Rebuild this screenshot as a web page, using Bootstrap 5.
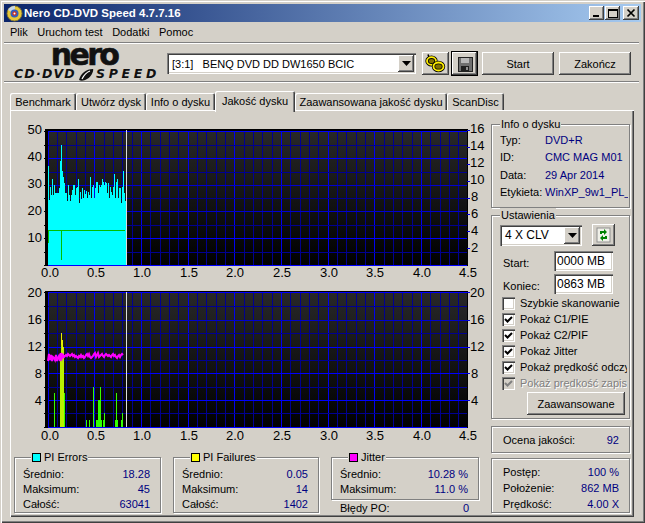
<!DOCTYPE html>
<html lang="pl">
<head>
<meta charset="utf-8">
<title>Nero CD-DVD Speed</title>
<link href="https://cdn.jsdelivr.net/npm/bootstrap@5.3.0/dist/css/bootstrap.min.css" rel="stylesheet">
<style>
html,body{margin:0;height:523px;overflow:hidden;background:#d4d0c8}
body{font-family:"Liberation Sans",Arial,sans-serif;font-size:11px;line-height:14px;color:#000}
.win{width:645px;height:523px;padding:4px;background:#d4d0c8;box-shadow:inset 1px 1px 0 #d4d0c8,inset 2px 2px 0 #fff,inset -1px -1px 0 #404040,inset -2px -2px 0 #808080}
.ttl{height:18px;background:linear-gradient(90deg,#0a246a,#a6caf0);color:#fff;font-weight:700;font-size:11.5px;padding:0 2px 0 2px}
.ttl svg.dsk{margin-right:1px}
.capb{width:15px;height:14px;background:#d4d0c8;box-shadow:inset -1px -1px 0 #404040,inset 1px 1px 0 #fff,inset -2px -2px 0 #808080;display:flex;align-items:center;justify-content:center}
.capm{margin-right:1px}
.capx{width:16px;margin-left:3px}
.mnu{height:20px;padding-left:6px}
.mnu span{margin-right:9.500px}
.sep{height:2px;border-top:1px solid #808080;background:#fff;margin-right:2px;box-sizing:border-box}
.tbar{height:37px;padding-top:8px}
.logo{width:163px;height:37px;margin-top:-8px;position:relative;flex:none}
.nero{font-family:"DejaVu Sans",sans-serif;font-weight:700;font-size:30px;letter-spacing:-2.6px;line-height:22px;text-align:center;padding-right:3px;height:22px;color:#111;-webkit-text-stroke:.6px #111}
.cdv{font-family:"DejaVu Sans",sans-serif;font-weight:700;font-style:italic;font-size:12.5px;line-height:13px;white-space:nowrap;padding-left:10px;margin-top:1px;color:#111}
.cdv b{letter-spacing:1.2px;font-weight:700}
.cdv i{letter-spacing:3.700px;font-weight:700}
.sunk{background:#fff;box-shadow:inset 1px 1px 0 #808080,inset 2px 2px 0 #404040,inset -1px -1px 0 #fff,inset -2px -2px 0 #d4d0c8}
.cbo{height:21px;align-items:center;padding:0 2px 0 5px}
.cbo1{width:249px;margin-top:1px}
.cbo2{width:82px;height:21px;padding-left:5px}
.cbo-t{flex:1;white-space:pre;font-size:11px}
.cbo2 .cbo-t{font-size:12px}
.arrw{width:16px;height:17px;background:#d4d0c8;box-shadow:inset -1px -1px 0 #404040,inset 1px 1px 0 #fff,inset -2px -2px 0 #808080;display:flex;align-items:center;justify-content:center;flex:none}
.wbtn.btn{--bs-btn-padding-x:0;--bs-btn-padding-y:0;--bs-btn-font-size:11px;--bs-btn-border-width:0;--bs-btn-border-radius:0;--bs-btn-line-height:14px;background:#d4d0c8;color:#000;box-shadow:inset -1px -1px 0 #404040,inset 1px 1px 0 #fff,inset -2px -2px 0 #808080;display:flex;align-items:center;justify-content:center;height:23px;font-family:"Liberation Sans",Arial,sans-serif}
.wbtn.def{box-shadow:0 0 0 1px #000,inset -1px -1px 0 #404040,inset 1px 1px 0 #fff,inset -2px -2px 0 #808080}
.w27{width:27px}.w25{width:25px}.w72{width:72px}
.tbtn1{margin-left:6px}.tbtn2{margin-left:3px}.tbtn3{margin-left:5px}.tbtn4{margin-left:5px}
.tabs.nav{margin:8px 0 0 2px;height:20px;align-items:flex-end;flex-wrap:nowrap;position:relative;z-index:2;padding-left:0}
.tabs .nav-link{display:block;height:17px;line-height:19px;padding:0;text-align:center;color:#000;background:#d4d0c8;border-radius:2px 2px 0 0;box-shadow:inset 1px 1px 0 #fff,inset -1px 0 0 #404040,inset -2px 0 0 #808080;margin-bottom:1px;white-space:nowrap}
.tabs .nav-link.active{height:21px;line-height:20px;margin-bottom:-1px;color:#000;background:#d4d0c8;box-shadow:inset 1px 1px 0 #fff,inset -1px 0 0 #404040,inset -2px 0 0 #808080}
.tabs li:nth-child(1) .nav-link{width:66px;margin-left:4px}
.tabs li:nth-child(2) .nav-link{width:70px}
.tabs li:nth-child(3) .nav-link{width:69px}
.tabs li:nth-child(4) .nav-link{width:80px}
.tabs li:nth-child(5) .nav-link{width:152px}
.tabs li:nth-child(6) .nav-link{width:57px}
.pane{margin:-1px 0 0 6px;width:624px;height:407px;padding:2px;box-shadow:inset 1px 1px 0 #fff,inset -1px -1px 0 #404040,inset -2px -2px 0 #808080;position:relative;z-index:1}
.lcol{width:479px;flex:none}
.rcol{width:140px;flex:none;padding-top:5px}
svg.chrt{display:block;font-family:"Liberation Sans",Arial,sans-serif;font-size:13px}
.grp{border:1px solid #808080;box-shadow:1px 1px 0 #fff,inset 1px 1px 0 #fff;padding:0 8px;margin:0;min-width:0}
fieldset.grp{border:1px solid #808080}
.grp legend{float:none;width:auto;font-size:11px;line-height:14px;margin:0;padding:0 1px;background:#d4d0c8;display:flex;align-items:center}
.sw{width:9px;height:9px;border:1px solid #000;margin:0 3px 0 0;flex:none;display:inline-block}
.c-cy{background:#00ffff}.c-ye{background:#ffff00}.c-ma{background:#ff00ff}
.val{color:#000080}
.inf{height:91px;width:139px;padding-right:1px}
.inf .rw{height:17.500px;display:flex;align-items:center;justify-content:flex-start;white-space:nowrap;overflow:hidden}
.inf .lb{width:45px;flex:none}
.ust{height:211px;width:139px;padding-right:2px}
.cb-row{margin-top:2px}
.rst{margin-top:3px}
.rw2{height:23px;display:flex;align-items:center}
.rw2 .lb{width:54px;padding:4px 0 0 3px;flex:none}
.fld.form-control{width:59px;height:20px;min-height:0;padding:0 0 0 3px;font-size:12px;line-height:18px;border:0;border-radius:0;color:#000;font-family:"Liberation Sans",Arial,sans-serif}
.sy.btn{width:23px;height:22px;margin-left:10px}
.ck.form-check{min-height:0;height:16px;padding:0;margin:0 0 0 2px;display:flex;align-items:center;white-space:nowrap;overflow:hidden;width:125px}
.ck .form-check-input{float:none;margin:0 5px 0 0;width:13px;height:13px;flex:none;border:0;border-radius:0;background-color:#fff;box-shadow:inset 1px 1px 0 #808080,inset 2px 2px 0 #404040,inset -1px -1px 0 #fff,inset -2px -2px 0 #d4d0c8;opacity:1}
.ck .form-check-input:checked{background-color:#fff;background-image:url("data:image/svg+xml,%3Csvg xmlns='http://www.w3.org/2000/svg' viewBox='0 0 13 13'%3E%3Cpath d='M3 6l2.500 2.500L10 4' fill='none' stroke='%23000' stroke-width='2'/%3E%3C/svg%3E");background-size:13px 13px}
.ck .form-check-input.dis:checked{background-color:#d4d0c8;background-image:url("data:image/svg+xml,%3Csvg xmlns='http://www.w3.org/2000/svg' viewBox='0 0 13 13'%3E%3Cpath d='M3 6l2.500 2.500L10 4' fill='none' stroke='%23808080' stroke-width='2'/%3E%3C/svg%3E")}
.ck .form-check-label{opacity:1;color:#000}
.ck .form-check-label.dis{color:#808080;text-shadow:1px 1px 0 #fff}
.adv.btn{width:98px;margin:1px 0 0 27px}
.oc{width:139px;height:27px;margin-top:7px;padding:0 10px 0 11px}
.pr{width:139px;height:55px;margin-top:5px;padding:5px 10px 0 11px}
.pr .rw{height:16px}
.rw{display:flex;justify-content:space-between;align-items:center}
.bot{margin:2px 0 0 2px;gap:12px}
.b1{width:147px;height:63px;padding:2px 10px 0 8px}
.b2{width:146px;height:63px;padding:2px 10px 0 8px}
.b3col{width:148px}
.b3{height:50px;padding:2px 10px 0 8px}
.grp .rw15{height:15px}
.bl{padding:1px 10px 0 9px;height:15px}
.bot legend{margin-left:8px}
</style>
</head>
<body>
<div class="win d-flex flex-column">
  <div class="ttl d-flex align-items-center">
    <svg class="dsk" width="17" height="17" viewBox="0 0 17 17"><circle cx="8.500" cy="8.500" r="7.500" fill="#e8c838" stroke="#8a7a30"/><path d="M8.500 8.500L2 5A7.500 7.500 0 0 1 9 1Z" fill="#c8d8e8"/><circle cx="8.500" cy="8.500" r="4" fill="#3060c0"/><circle cx="8.500" cy="8.500" r="2.200" fill="#d03020"/><circle cx="8.500" cy="8.500" r="1" fill="#fff"/></svg>
    <span class="flex-grow-1">Nero CD-DVD Speed 4.7.7.16</span>
    <span class="capb capm"><svg width="10" height="10" viewBox="0 0 10 10" shape-rendering="crispEdges"><rect x="1" y="7" width="6" height="2" fill="#000"/></svg></span>
    <span class="capb"><svg width="10" height="10" viewBox="0 0 10 10" shape-rendering="crispEdges"><path d="M0.500 1.500h9v8h-9zM0 1h10v1H0z" fill="none" stroke="#000"/></svg></span>
    <span class="capb capx"><svg width="10" height="10" viewBox="0 0 10 10"><path d="M1.500 1.500l7 7M8.500 1.500l-7 7" stroke="#000" stroke-width="1.700"/></svg></span>
  </div>
  <div class="mnu d-flex align-items-center"><span>Plik</span><span>Uruchom test</span><span>Dodatki</span><span>Pomoc</span></div>
  <div class="sep"></div>
  <div class="tbar d-flex align-items-start">
    <div class="logo">
      <div class="nero">nero</div>
      <div class="cdv"><b>CD·DVD</b><svg width="20" height="12" viewBox="0 0 20 12"><path d="M3 11C5 4 10 0 17 0C18 0 16 8 11 10C8 12 5 12 3 11Z" fill="#111"/><path d="M6 10C8 6 11 3 14 2" stroke="#fff" stroke-width="1.200" fill="none"/></svg><i>SPEED</i></div>
    </div>
    <div class="sunk cbo cbo1 d-flex"><span class="cbo-t">[3:1]   BENQ DVD DD DW1650 BCIC</span><span class="arrw"><svg width="9" height="5" viewBox="0 0 9 5"><path d="M0 0h9L4.500 5Z" fill="#000"/></svg></span></div>
    <button type="button" class="btn wbtn w27 tbtn1"><svg width="21" height="19" viewBox="0 0 21 19"><path d="M3 0.500l2 5M15 10l2 5" stroke="#000" stroke-width="1.600"/><ellipse cx="6.500" cy="7" rx="4.500" ry="3.800" fill="#807000" stroke="#000" stroke-width="3.400"/><ellipse cx="6.500" cy="7" rx="4.500" ry="3.800" fill="none" stroke="#ffee00" stroke-width="1.800"/><ellipse cx="13.500" cy="12.500" rx="5" ry="4" fill="#807000" stroke="#000" stroke-width="3.400"/><ellipse cx="13.500" cy="12.500" rx="5" ry="4" fill="none" stroke="#ffee00" stroke-width="1.800"/></svg></button>
    <button type="button" class="btn wbtn def w25 tbtn2"><svg width="16" height="16" viewBox="0 0 16 16" shape-rendering="crispEdges"><rect x="1" y="1" width="14" height="14" fill="#707070" stroke="#222"/><rect x="4" y="2" width="8" height="5" fill="#b8b8b8"/><rect x="4" y="10" width="8" height="5" fill="#202020"/><rect x="9" y="11" width="2" height="3" fill="#909090"/></svg></button>
    <button type="button" class="btn wbtn w72 tbtn3">Start</button>
    <button type="button" class="btn wbtn w72 tbtn4">Zakończ</button>
  </div>
  <div class="sep"></div>
  <ul class="nav tabs">
    <li class="nav-item"><a class="nav-link" href="#">Benchmark</a></li>
    <li class="nav-item"><a class="nav-link" href="#">Utwórz dysk</a></li>
    <li class="nav-item"><a class="nav-link" href="#">Info o dysku</a></li>
    <li class="nav-item"><a class="nav-link active" href="#">Jakość dysku</a></li>
    <li class="nav-item"><a class="nav-link" href="#">Zaawansowana jakość dysku</a></li>
    <li class="nav-item"><a class="nav-link" href="#">ScanDisc</a></li>
  </ul>
  <div class="pane d-flex">
    <div class="lcol">
      <svg class="chrt" width="479" height="173" viewBox="12 112 479 173" shape-rendering="crispEdges">
        <defs><linearGradient id="gr" x1="0" y1="0" x2="0" y2="1"><stop offset="0" stop-color="#282828"/><stop offset="1" stop-color="#000"/></linearGradient></defs>
        <rect x="45" y="129" width="423" height="137" fill="#000"/>
        <rect x="48" y="131" width="419" height="134" fill="url(#gr)"/>
        <g id="g1"></g>
        <path id="cy" fill="#00ffff"/>
        <path d="M48 230.500H125M48.500 230V243M61.500 230V260" stroke="#00c000" fill="none"/>
        <path d="M126.500 130V265" stroke="#dcdcdc" fill="none"/>
        <g shape-rendering="auto">
          <text x="42" y="134" text-anchor="end">50</text><text x="42" y="161" text-anchor="end">40</text><text x="42" y="188" text-anchor="end">30</text><text x="42" y="215" text-anchor="end">20</text><text x="42" y="242" text-anchor="end">10</text>
          <text x="470" y="133">16</text><text x="470" y="150">14</text><text x="470" y="167">12</text><text x="470" y="184">10</text><text x="471" y="201">8</text><text x="471" y="218">6</text><text x="471" y="235">4</text><text x="471" y="252">2</text>
          <g id="x1" text-anchor="middle">
            <text x="50" y="277">0.0</text><text x="96" y="277">0.5</text><text x="142" y="277">1.0</text><text x="189" y="277">1.5</text><text x="235" y="277">2.0</text><text x="282" y="277">2.5</text><text x="329" y="277">3.0</text><text x="375" y="277">3.5</text><text x="422" y="277">4.0</text><text x="468" y="277">4.5</text>
          </g>
        </g>
      </svg>
      <svg class="chrt" width="479" height="163" viewBox="12 285 479 163" shape-rendering="crispEdges">
        <rect x="45" y="291" width="423" height="137" fill="#000"/>
        <rect x="48" y="293" width="419" height="134" fill="url(#gr)"/>
        <g id="g2"></g>
        <path id="gb" stroke="#33ff00" fill="none"/>
        <path d="M60.500 360V427M61.500 333V427M62.500 340V427M63.500 347V427" stroke="#b8f000" fill="none"/>
        <path d="M61.500 333V345M62.500 340V350" stroke="#e8f000" fill="none"/>
        <polyline id="jt" fill="none" stroke="#ff00ff" stroke-width="2" shape-rendering="auto"/>
        <path d="M126.500 292V427" stroke="#dcdcdc" fill="none"/>
        <g shape-rendering="auto">
          <text x="42" y="297" text-anchor="end">20</text><text x="42" y="324" text-anchor="end">16</text><text x="42" y="351" text-anchor="end">12</text><text x="42" y="378" text-anchor="end">8</text><text x="42" y="405" text-anchor="end">4</text>
          <text x="470" y="297">20</text><text x="470" y="324">16</text><text x="470" y="351">12</text><text x="471" y="378">8</text><text x="471" y="405">4</text>
          <g text-anchor="middle">
            <text x="50" y="440">0.0</text><text x="96" y="440">0.5</text><text x="142" y="440">1.0</text><text x="189" y="440">1.5</text><text x="235" y="440">2.0</text><text x="282" y="440">2.5</text><text x="329" y="440">3.0</text><text x="375" y="440">3.5</text><text x="422" y="440">4.0</text><text x="468" y="440">4.5</text>
          </g>
        </g>
      </svg>
      <div class="bot d-flex align-items-start">
        <fieldset class="grp b1">
          <legend><span class="sw c-cy"></span>PI Errors</legend>
          <div class="rw rw15"><span>Średnio:</span><span class="val">18.28</span></div>
          <div class="rw rw15"><span>Maksimum:</span><span class="val">45</span></div>
          <div class="rw rw15"><span>Całość:</span><span class="val">63041</span></div>
        </fieldset>
        <fieldset class="grp b2">
          <legend><span class="sw c-ye"></span>PI Failures</legend>
          <div class="rw rw15"><span>Średnio:</span><span class="val">0.05</span></div>
          <div class="rw rw15"><span>Maksimum:</span><span class="val">14</span></div>
          <div class="rw rw15"><span>Całość:</span><span class="val">1402</span></div>
        </fieldset>
        <div class="b3col">
          <fieldset class="grp b3">
            <legend><span class="sw c-ma"></span>Jitter</legend>
            <div class="rw rw15"><span>Średnio:</span><span class="val">10.28 %</span></div>
            <div class="rw rw15"><span>Maksimum:</span><span class="val">11.0 %</span></div>
          </fieldset>
          <div class="rw bl"><span>Błędy PO:</span><span class="val">0</span></div>
        </div>
      </div>
    </div>
    <div class="rcol">
      <fieldset class="grp inf">
        <legend>Info o dysku</legend>
        <div class="rw"><span class="lb">Typ:</span><span class="val flex-grow-1">DVD+R</span></div>
        <div class="rw"><span class="lb">ID:</span><span class="val flex-grow-1">CMC MAG M01</span></div>
        <div class="rw"><span class="lb">Data:</span><span class="val flex-grow-1">29 Apr 2014</span></div>
        <div class="rw"><span class="lb">Etykieta:</span><span class="val flex-grow-1">WinXP_9w1_PL_</span></div>
      </fieldset>
      <fieldset class="grp ust">
        <legend>Ustawienia</legend>
        <div class="d-flex align-items-center cb-row">
          <div class="sunk cbo cbo2 d-flex"><span class="cbo-t">4 X CLV</span><span class="arrw"><svg width="9" height="5" viewBox="0 0 9 5"><path d="M0 0h9L4.500 5Z" fill="#000"/></svg></span></div>
          <button type="button" class="btn wbtn sy"><svg width="15" height="16" viewBox="0 0 15 16"><rect x="1" y="1" width="13" height="14" fill="#f0f0e8" stroke="#909090"/><path d="M4 7V4h4V2l3 3-3 3V6H6v1ZM11 9v3H7v2l-3-3 3-3v2h2V9Z" fill="#008000"/></svg></button>
        </div>
        <div class="rw2 rst"><span class="lb">Start:</span><input class="form-control fld sunk" value="0000 MB"></div>
        <div class="rw2"><span class="lb">Koniec:</span><input class="form-control fld sunk" value="0863 MB"></div>
        <div class="form-check ck"><input class="form-check-input" type="checkbox" id="c1"><label class="form-check-label" for="c1">Szybkie skanowanie</label></div>
        <div class="form-check ck"><input class="form-check-input" type="checkbox" id="c2" checked><label class="form-check-label" for="c2">Pokaż C1/PIE</label></div>
        <div class="form-check ck"><input class="form-check-input" type="checkbox" id="c3" checked><label class="form-check-label" for="c3">Pokaż C2/PIF</label></div>
        <div class="form-check ck"><input class="form-check-input" type="checkbox" id="c4" checked><label class="form-check-label" for="c4">Pokaż Jitter</label></div>
        <div class="form-check ck"><input class="form-check-input" type="checkbox" id="c5" checked><label class="form-check-label" for="c5">Pokaż prędkość odczytu</label></div>
        <div class="form-check ck"><input class="form-check-input dis" type="checkbox" id="c6" checked><label class="form-check-label dis" for="c6">Pokaż prędkość zapisu</label></div>
        <button type="button" class="btn wbtn adv">Zaawansowane</button>
      </fieldset>
      <div class="grp oc rw"><span>Ocena jakości:</span><span class="val">92</span></div>
      <div class="grp pr">
        <div class="rw"><span>Postęp:</span><span class="val">100 %</span></div>
        <div class="rw"><span>Położenie:</span><span class="val">862 MB</span></div>
        <div class="rw"><span>Prędkość:</span><span class="val">4.00 X</span></div>
      </div>
    </div>
  </div>
</div>
<script>
(function(){
  var NS='http://www.w3.org/2000/svg';
  function line(g,x1,y1,x2,y2,c){var l=document.createElementNS(NS,'line');l.setAttribute('x1',x1);l.setAttribute('y1',y1);l.setAttribute('x2',x2);l.setAttribute('y2',y2);l.setAttribute('stroke',c);g.appendChild(l);}
  function grid(id,top,bot,hs,rt){
    var g=document.getElementById(id);
    for(var i=0;i<45;i++){var x=Math.round(47.7+9.333*i)+.5;line(g,x,top,x,bot,i%5==0?'#0000f0':'#000090');}
    hs.forEach(function(h){line(g,48,h[0]+.5,467,h[0]+.5,h[1]);line(g,44,h[0]+.5,48,h[0]+.5,'#000');});
    rt.forEach(function(y){line(g,467,y+.5,470,y+.5,'#0000e0');});
  }
  grid('g1',131,265,[[131,'#0000ff'],[145,'#000090'],[158,'#0000ff'],[172,'#000090'],[185,'#0000d0'],[198,'#000090'],[211,'#0000d0'],[225,'#000090'],[238,'#0000ff'],[252,'#000090'],[265,'#0000ff']],[130,147,164,181,198,214,231,248]);
  grid('g2',293,427,[[292,'#0000ff'],[306,'#000090'],[320,'#0000d0'],[333,'#000090'],[347,'#0000ff'],[360,'#000090'],[373,'#0000ff'],[387,'#000090'],[400,'#0000ff'],[413,'#000090'],[427,'#0000ff']],[292,320,347,373,400]);
  var a=[138,240,200,225,177,225,195,218,218,218,218,205,123,75,153,170,190,218,218,242,195,225,242,225,210,195,195,225,205,200,178,248,215,237,205,235,210,222,213,233,217,225,170,235,200,195,235,205,186,186,220,195,200,195,178,186,195,186,190,220,190,235,200,215,225,200,162,235,185,178,235,205,205,248,200,153,218,243,243];
  var d='M48 265';a.forEach(function(v){d+='V'+Math.round(120+v/3)+'h1';});
  document.getElementById('cy').setAttribute('d',d+'V265Z');
  var b=[[54,393],[64,393],[86,420],[89,420],[93,387],[96,420],[97,420],[98,400],[99,400],[100,387],[101,420],[103,420],[104,413],[115,420],[116,393],[117,420],[121,420],[122,413]];
  document.getElementById('gb').setAttribute('d',b.map(function(p){return 'M'+(p[0]+.5)+' '+p[1]+'V427';}).join(''));
  var j=[361,354,360,355,361,357,358,360,355,361,358,356,361,353,358,355,357,356,355,356,354,355,356,355,354,356,355,357,356,357,358,356,357,355,357,356,358,357,355,354,356,354,357,358,357,356,354,353,357,355,353,357,356,355,354,356,357,355,354,355,356,355,356,357,355,354,356,355,357,358,356,355,357,355,354,355];
  document.getElementById('jt').setAttribute('points',j.map(function(y,i){return (48+i)+','+y;}).join(' '));
})();
</script>
</body>
</html>
